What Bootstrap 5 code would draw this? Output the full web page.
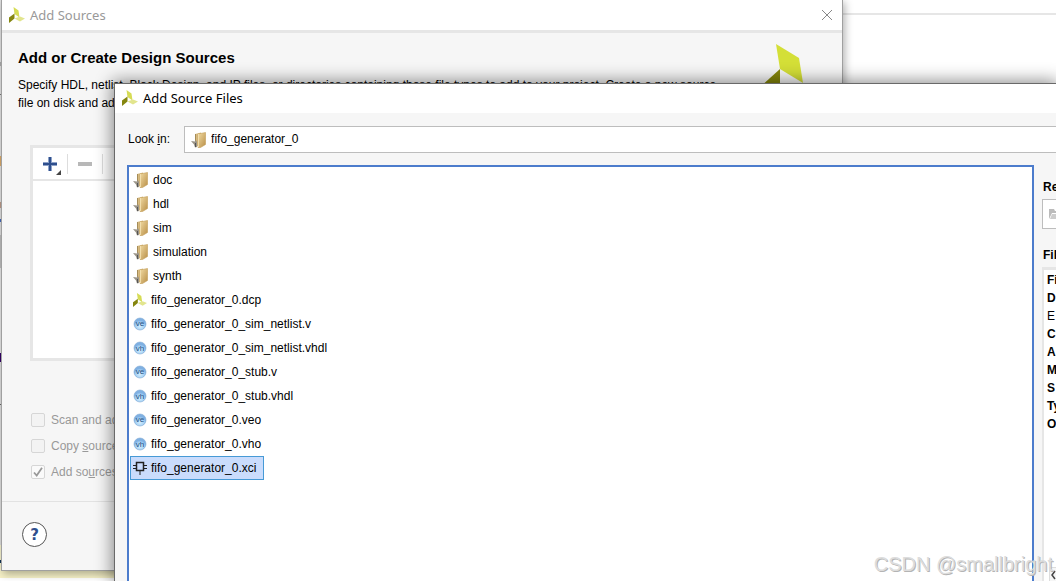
<!DOCTYPE html>
<html lang="en">
<head>
<meta charset="utf-8">
<meta name="viewport" content="width=device-width, initial-scale=1">
<title>Add Source Files</title>
<link href="https://cdn.jsdelivr.net/npm/bootstrap@5.3.0/dist/css/bootstrap.min.css" rel="stylesheet">
<style>
body{font:12px/18px "Liberation Sans",Arial,sans-serif;color:#000;background:#fff}
.desk{height:100vh}
.desk-rule{top:13px;left:0;right:0;height:2px;background:#e6e6e6}
.desk-edge{left:0;top:0;bottom:0;width:2px;background:linear-gradient(#e0e0e0 0 62px,#aaa 62px 66px,#e0e0e0 66px 94px,#777 94px 95px,#e0e0e0 95px 156px,#d8a868 156px 166px,#e0e0e0 166px 202px,#b98 202px 208px,#ddd 208px 219px,#4468b8 219px 222px,#ddd 222px 235px,#bbb 235px 268px,#e4e4e4 268px 353px,#306 353px 362px,#ddd 362px 404px,#666 404px 405px,#ddd 405px 545px,#f5f1cc 545px 560px,#135 560px 563px,#f5f1cc 563px 571px,#fff 571px)}
.desk-strip{left:0;top:571px;width:114px;height:7px;background:#f7f2c8}
.win{background:#f6f6f6;display:flex;flex-direction:column}
.win-back{left:1px;top:-1px;width:842px;height:572px;border:1px solid #a0a0a0;box-shadow:2px 3px 8px rgba(0,0,0,.3)}
.win-front{left:114px;top:83px;right:0;bottom:0;border:solid #696969;border-width:1px 0 0 1px;box-shadow:0 0 16px 2px rgba(0,0,0,.45)}
.titlebar{height:30px;background:#fff;font:13px/18px "Noto Sans","Open Sans",sans-serif;gap:5px;padding:0 7px}
.win-back .titlebar{height:33px;border-bottom:3px solid #e6e6e6;color:#999}
.win-back .titlebar button{margin-right:2px}
.bare{border:0;background:none;padding:0;line-height:0}
.intro{padding:17px 16px 0;height:112px}
.intro h1{font:bold 15px/16px "Liberation Sans",Arial,sans-serif;margin:0 0 10px}
.brand{right:30px;top:11px}
.srcbox{margin:0 28px;height:216px;border:3px solid #e6e6e6;background:#fff}
.toolrow{height:33px;border-bottom:2px solid #e6e6e6}
.toolrow button{width:34px;height:31px}
.toolrow i{width:1px;height:20px;background:#ddd}
.opts{padding:46px 29px 0;color:#999}
.opts label{height:26px;gap:6px}
.opts input{appearance:none;width:14px;height:14px;margin:0;border:1px solid #d6d6d6;border-radius:2px;background:#f3f3f3}
.opts input:checked{background:#fafafa url("data:image/svg+xml,%3Csvg xmlns='http://www.w3.org/2000/svg' viewBox='0 0 12 12'%3E%3Cpath d='M2 6.5l2.7 3L10 1.8' fill='none' stroke='%23999' stroke-width='1.8'/%3E%3C/svg%3E")}
.foot{margin-top:16px;border-top:1px solid #e2e2e2;padding:20px 20px}
.help{width:25px;height:25px;border:1px solid #555;border-radius:50%;background:#fff;color:#2f4f8d;font:bold 15px/22px "DejaVu Sans",sans-serif;padding:0}
.lookrow{padding:13px 0 0 13px;gap:14px}
.lookbox select{appearance:none;width:100%;height:27px;border:1px solid #bdbdbd;border-right:0;border-radius:0;background:#fff;padding:0 0 0 26px;font:12px/18px "Liberation Sans",Arial,sans-serif;color:#000}
.lookbox svg{left:7px;top:5px}
.panes{padding:12px 0 0 12px;gap:8px;min-height:0}
.files{border:2px solid #4c7ccc;border-bottom:0;background:#fff;padding:1px;overflow:hidden}
.files button{border:1px solid transparent;background:none;padding:0 7px 0 2px;height:24px;gap:4px;color:#000;text-align:left}
.files .chosen{background:#cadcfc;border-color:#479ad6}
.glyph{font:8px "Liberation Sans",Arial,sans-serif;fill:#1f4f80}
.aside-col{flex:0 0 14px;overflow:hidden;white-space:nowrap;padding-top:13px}
.aside-col b{display:block;margin-left:1px}
.recent{height:30px;border:1px solid #bdbdbd;border-right:0;background:#fff;margin:3px 0 17px;width:100%;padding:0 0 0 6px;text-align:left}
.preview{border:solid #e6e6e6;border-width:3px 0 0 3px;background:#fff;padding:1px 0 0 2px;margin-top:3px;margin-left:-1px;height:330px}
.preview div{height:18px;margin-left:1px}
.scroller{right:0;bottom:0;width:7px;height:14px;background:#f6f6f6;border:solid #ddd;border-width:1px 0 0 1px}
.mark-csdn{right:3px;bottom:4px;font:20px/26px "Liberation Sans",Arial,sans-serif;color:#ddd;text-shadow:1px 1px 0 #b4b4b4;pointer-events:none}
</style>
</head>
<body>
<svg width="0" height="0" class="position-absolute" aria-hidden="true">
<defs>
<linearGradient id="gold" x1="0" y1="0" x2="1" y2="1"><stop stop-color="#f2dca4"/><stop offset="1" stop-color="#b98f48"/></linearGradient>
<radialGradient id="blue" cx=".5" cy=".7"><stop stop-color="#d2edfd"/><stop offset=".7" stop-color="#a4d0f4"/><stop offset="1" stop-color="#7fb0e2"/></radialGradient>
<symbol id="leaf" viewBox="0 0 16 16"><path d="M4.500 0l5 3.500 1 7L5.500 7z" fill="#d6dc55"/><path d="M5.500 6.500v5L0 16v-5.500z" fill="#85860f"/><path d="M5.500 11.500L11 9.500l5 2-5 3z" fill="#e2e58e"/></symbol>
<symbol id="folder" viewBox="0 0 16 18"><path d="M4 3l6-1.500v13l-6 1z" fill="#d6ba80"/><path d="M4.500 3v8" stroke="#a58c58"/><path d="M7 3l7.500-1.500v12l-5 3H7z" fill="url(#gold)" stroke="#c29d57" stroke-width=".6"/><path d="M7.500 3v13" stroke="#f7e7ba" stroke-width=".8"/><path d="M0 10l4 .5 1-1.500 1 2v5l-2 .5-1-3z" fill="#9a9488"/><path d="M4.500 12v4" stroke="#555"/></symbol>
<symbol id="ball" viewBox="0 0 14 14"><circle cx="7" cy="7" r="6" fill="url(#blue)" stroke="#7da7d4" stroke-width=".6"/></symbol>
</defs></svg>
<main class="desk position-relative overflow-hidden">
<div class="desk-rule position-absolute"></div>
<div class="desk-edge position-absolute"></div>
<div class="desk-strip position-absolute"></div>

<section class="win win-back position-absolute">
<header class="titlebar d-flex align-items-center"><svg width="16" height="16"><use href="#leaf"/></svg><span class="flex-grow-1">Add Sources</span><button class="bare" aria-label="Close"><svg width="12" height="12" stroke="#888" fill="none"><path d="M1 1l10 10M11 1L1 11"/></svg></button></header>
<div class="intro position-relative"><h1>Add or Create Design Sources</h1>
<div>Specify HDL, netlist, Block Design, and IP files, or directories containing those file types to add to your project. Create a new source<br>file on disk and add it to your project.</div>
<svg class="brand position-absolute" width="52" height="60"><path d="M16 0l23 14 4 25-23-14z" fill="#d4df37"/><path d="M20 25v20L0 60V43z" fill="#85860a"/></svg></div>
<div class="srcbox"><div class="toolrow d-flex align-items-center">
<button class="bare" aria-label="Add"><svg width="22" height="24"><path d="M11 5v14M4 12h14" stroke="#8da2c8" stroke-width="4"/><path d="M11 5v14M4 12h14" stroke="#2f4f8d" stroke-width="2"/><path d="M22 18v5h-5z" fill="#444"/></svg></button><i></i><button class="bare" aria-label="Remove"><svg width="16" height="6"><path d="M1 3h14" stroke="#b8b8b8" stroke-width="4"/></svg></button><i></i></div></div>
<div class="opts">
<label class="d-flex align-items-center"><input type="checkbox" disabled><span>Scan and add RTL include files into project</span></label>
<label class="d-flex align-items-center"><input type="checkbox" disabled><span>Copy <u>s</u>ources into project</span></label>
<label class="d-flex align-items-center"><input type="checkbox" checked disabled><span>Add so<u>u</u>rces from subdirectories</span></label></div>
<div class="foot"><button class="help" aria-label="Help">?</button></div>
</section>

<section class="win win-front position-absolute">
<header class="titlebar d-flex align-items-center"><svg width="16" height="16"><use href="#leaf"/></svg><span>Add Source Files</span></header>
<div class="lookrow d-flex align-items-center"><label for="look">Look <u>i</u>n:</label><div class="lookbox position-relative flex-grow-1"><select id="look"><option>fifo_generator_0</option></select><svg class="position-absolute" width="16" height="18"><use href="#folder"/></svg></div></div>
<div class="panes d-flex flex-grow-1">
<div class="files d-flex flex-column align-items-start flex-grow-1">
<button class="d-flex align-items-center"><svg width="16" height="18"><use href="#folder"/></svg><span>doc</span></button>
<button class="d-flex align-items-center"><svg width="16" height="18"><use href="#folder"/></svg><span>hdl</span></button>
<button class="d-flex align-items-center"><svg width="16" height="18"><use href="#folder"/></svg><span>sim</span></button>
<button class="d-flex align-items-center"><svg width="16" height="18"><use href="#folder"/></svg><span>simulation</span></button>
<button class="d-flex align-items-center"><svg width="16" height="18"><use href="#folder"/></svg><span>synth</span></button>
<button class="d-flex align-items-center"><svg width="14" height="14"><use href="#leaf"/></svg><span>fifo_generator_0.dcp</span></button>
<button class="d-flex align-items-center"><svg width="14" height="14"><use href="#ball"/><text class="glyph" x="7" y="9" text-anchor="middle">ve</text></svg><span>fifo_generator_0_sim_netlist.v</span></button>
<button class="d-flex align-items-center"><svg width="14" height="14"><use href="#ball"/><text class="glyph" x="7" y="10" text-anchor="middle">vh</text></svg><span>fifo_generator_0_sim_netlist.vhdl</span></button>
<button class="d-flex align-items-center"><svg width="14" height="14"><use href="#ball"/><text class="glyph" x="7" y="9" text-anchor="middle">ve</text></svg><span>fifo_generator_0_stub.v</span></button>
<button class="d-flex align-items-center"><svg width="14" height="14"><use href="#ball"/><text class="glyph" x="7" y="10" text-anchor="middle">vh</text></svg><span>fifo_generator_0_stub.vhdl</span></button>
<button class="d-flex align-items-center"><svg width="14" height="14"><use href="#ball"/><text class="glyph" x="7" y="9" text-anchor="middle">ve</text></svg><span>fifo_generator_0.veo</span></button>
<button class="d-flex align-items-center"><svg width="14" height="14"><use href="#ball"/><text class="glyph" x="7" y="10" text-anchor="middle">vh</text></svg><span>fifo_generator_0.vho</span></button>
<button class="chosen d-flex align-items-center"><svg width="14" height="14" fill="none" stroke="#222"><path d="M3.500 1.500h7v8h-7z" stroke-width="1.500"/><path d="M0 4.500h3M0 7.500h3M11 4.500h3M11 7.500h3M7 10v4"/></svg><span>fifo_generator_0.xci</span></button>
</div>
<aside class="aside-col"><b>Recent</b>
<button class="bare recent" aria-label="Recent directories"><svg width="14" height="12"><path d="M0 11V1h5l1 2h6v2H3z" fill="#bbb"/><path d="M1 11l2-5h10l-2 5z" fill="#ccc"/></svg></button>
<b>File</b>
<div class="preview"><div><strong>File:</strong></div><div><strong>D</strong></div><div>E</div><div><strong>C</strong></div><div><strong>A</strong></div><div><strong>M</strong></div><div><strong>S</strong></div><div><strong>Ty</strong></div><div><strong>O</strong></div></div>
</aside></div>
<button class="bare scroller position-absolute" aria-label="Scroll left"><svg width="6" height="10" fill="none" stroke="#444" stroke-width="1.500"><path d="M5 1L2 5l3 4"/></svg></button>
</section>
<div class="mark-csdn position-absolute">CSDN @smallbright</div>
</main>
<script src="https://cdn.jsdelivr.net/npm/bootstrap@5.3.0/dist/js/bootstrap.bundle.min.js"></script>
</body>
</html>
